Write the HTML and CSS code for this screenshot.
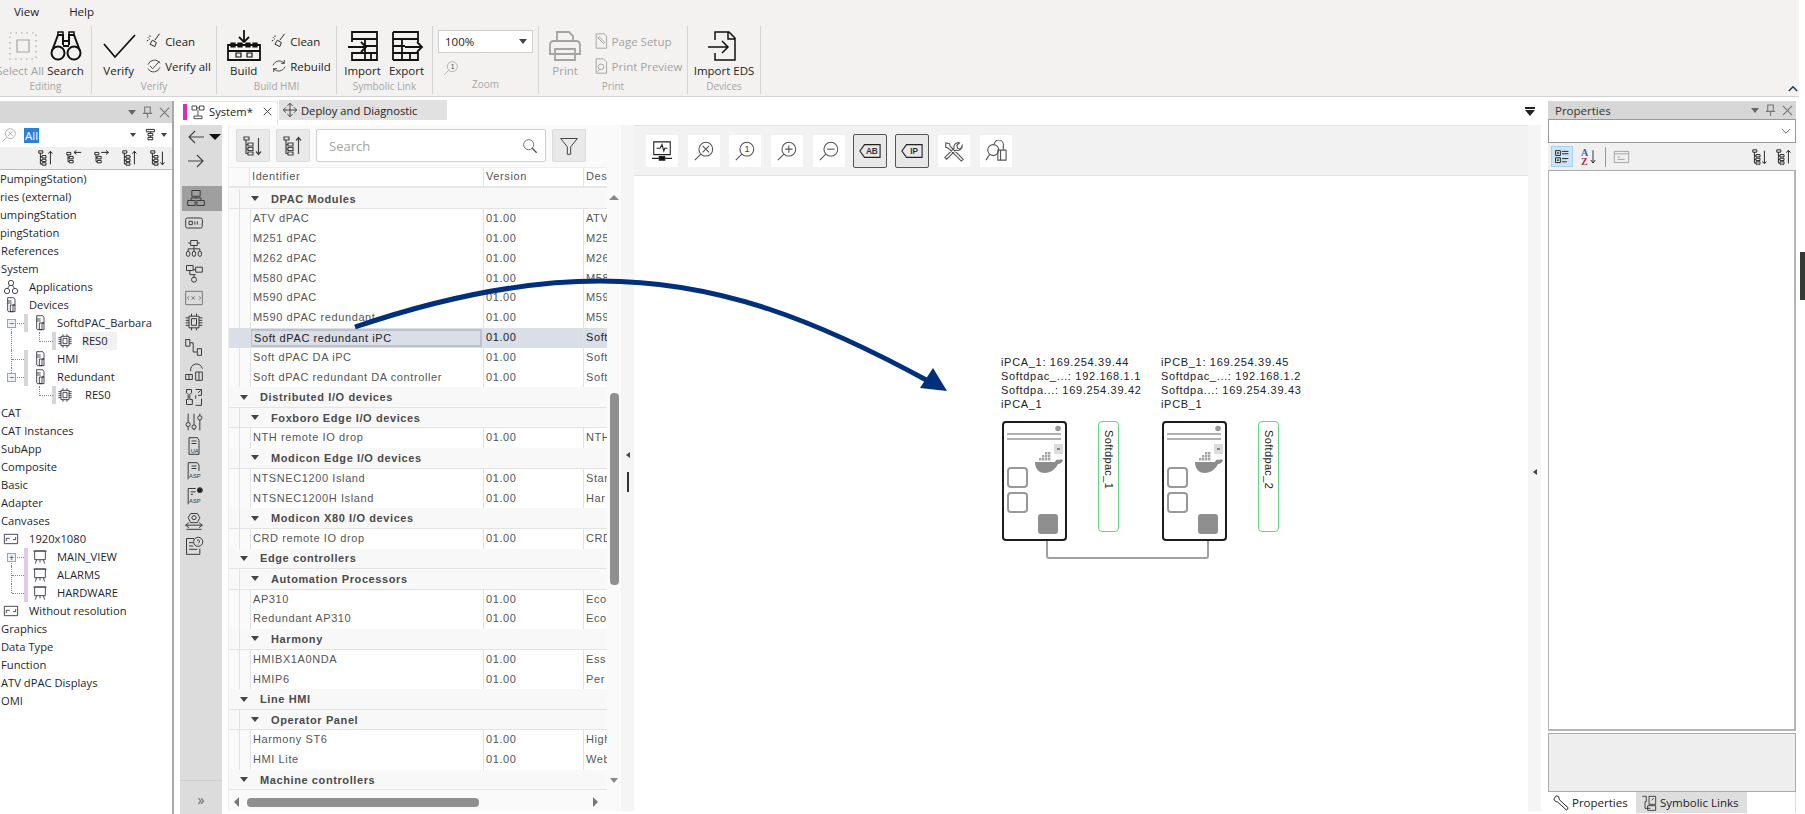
FILE: index.html
```html
<!DOCTYPE html>
<html>
<head>
    <title>System</title>
    <link rel="stylesheet" href="styles.css">
</head>
<body>
    <svg class="defs" width="0" height="0">
        <symbol id="i-tree-down" viewBox="0 0 20 20"><path d="M1 1h5v3H1zM5 7h5v3H5zM5 11.500h5v3H5zM5 16h5v3H5zM3 4v13.500h2M3 8.500h2M3 13h2M15.500 2v16M13 15.500l2.500 3 2.500-3"/></symbol>
        <symbol id="i-tree-up" viewBox="0 0 20 20"><path d="M1 1h5v3H1zM5 7h5v3H5zM5 11.500h5v3H5zM5 16h5v3H5zM3 4v13.500h2M3 8.500h2M3 13h2M15.500 18V2M13 4.500l2.500-3 2.500 3"/></symbol>
        <symbol id="i-tree-left" viewBox="0 0 20 20"><path d="M1 3h5v3H1zM4 8h5v3H4zM4 13h5v3H4zM2.500 6v8.500H4M2.500 9.500H4M19 3H10M13 .5L10 3l3 2.500"/></symbol>
        <symbol id="i-tree-right" viewBox="0 0 20 20"><path d="M1 3h5v3H1zM4 8h5v3H4zM4 13h5v3H4zM2.500 6v8.500H4M2.500 9.500H4M9 3h9M15 .5L18 3l-3 2.500"/></symbol>
        <symbol id="i-zoom" viewBox="0 0 24 24"><circle cx="14" cy="10" r="7.500"/><path d="M8.500 15.500L2 22"/></symbol>
        <symbol id="i-device" viewBox="0 0 20 24"><path d="M5 1h9l2 3v8h-3v10H6l-1-2zM9 12h7v10H9zM5 6h6M5 9h6"/></symbol>
        <symbol id="i-chip" viewBox="0 0 24 24"><path d="M6 5h12v14H6zM9 8h6v8H9zM2 7h4M2 10h4M2 13h4M2 16h4M18 7h4M18 10h4M18 13h4M18 16h4M9 2v3M15 2v3M9 19v3M15 19v3"/></symbol>
        <symbol id="i-apps" viewBox="0 0 24 24"><circle cx="12" cy="6" r="4"/><circle cx="6" cy="18" r="4"/><circle cx="18" cy="18" r="4"/><path d="M10 9l-3 5M14 9l3 5"/></symbol>
        <symbol id="i-res" viewBox="0 0 24 24"><path d="M2 5h20v14H2zM5 15v-4h5M19 9v4h-4"/></symbol>
        <symbol id="i-board" viewBox="0 0 24 24"><path d="M4 3h16v13H4zM2 3h20M7 16l-2 6M17 16l2 6M12 16v4"/></symbol>
        <symbol id="i-broom" viewBox="0 0 20 20"><path d="M17 1l-6 8M8 9l5 3-2 5-6-3zM2 5l1 1M5 3v2M1 10l2-1M4 8l1-1"/></symbol>
        <symbol id="i-verifyall" viewBox="0 0 24 24"><path d="M21 8a10 10 0 0 0-18 2M3 16a10 10 0 0 0 18-2M6 12l4 4 10-11"/></symbol>
        <symbol id="i-rebuild" viewBox="0 0 24 24"><path d="M20 8a10 10 0 0 0-17 3M4 16a10 10 0 0 0 17-3M20 3v5h-5M4 21v-5h5"/></symbol>
        <symbol id="i-table-in" viewBox="0 0 32 32"><path d="M5 12V2h25v28H5v-8M5 9h25M5 23h25M18 9v21M24 23v7M18 16h12M1 17h18M14 12l5 5-5 5"/></symbol>
        <symbol id="i-table-out" viewBox="0 0 32 32"><path d="M2 2h25v10M2 30V2M2 30h25v-8M2 9h25M2 23h25M11 9v21M19 23v7M2 16h12M14 17h17M26 12l5 5-5 5"/></symbol>
        <symbol id="ipc" viewBox="0 0 65 120">
            <rect x="1" y="1" width="63" height="118" rx="3" fill="#fff" stroke="#1c1c1c" stroke-width="2"/>
            <circle cx="56" cy="7.500" r="2.800" fill="#999" stroke="none"/>
            <path d="M5 13h54M5 18h54" stroke="#999" stroke-width="1.500" fill="none"/>
            <rect x="52" y="23" width="9" height="10" fill="#ddd" stroke="none"/>
            <path d="M55 28h3" stroke="#333" stroke-width="1"/>
            <path d="M33 41h20c1-3 3-3 4-2 1-1 3-1 4 0-1 3-3 4-5 4-2 5-8 9-13 9-7 0-10-5-10-11z" fill="#8c8c8c" stroke="none"/>
            <path d="M37 37h2.400v2.400H37zM40 37h2.400v2.400H40zM43 37h2.400v2.400H43zM46 37h2.400v2.400H46zM40 34h2.400v2.400H40zM43 34h2.400v2.400H43zM46 34h2.400v2.400H46zM43 31h2.400v2.400H43zM46 31h2.400v2.400H46z" fill="#a5a5a5" stroke="none"/>
            <rect x="6" y="47" width="19" height="19" rx="3" fill="none" stroke="#999" stroke-width="2"/>
            <rect x="6" y="72" width="19" height="19" rx="3" fill="none" stroke="#999" stroke-width="2"/>
            <rect x="36" y="93" width="20" height="20" rx="3" fill="#8f8f8f" stroke="none"/>
        </symbol>
    </svg>

    <div class="menubar">
        <span class="menu-item">View</span>
        <span class="menu-item">Help</span>
    </div>

    <div class="ribbon">
        <div class="rgroup w-editing">
            <div class="rbody">
                <div class="big off cut">
                    <svg class="ic32" viewBox="0 0 32 32"><path d="M3 3h26v26H3z" stroke-dasharray="1.500 4"/><path d="M10 10h12v12H10z"/></svg>
                    <span>Select All</span>
                </div>
                <div class="big">
                    <svg class="ic32" viewBox="0 0 32 32"><circle cx="8" cy="23" r="6.500" stroke-width="2"/><circle cx="24" cy="23" r="6.500" stroke-width="2"/><path d="M2 21L8 5h5v10M30 21L24 5h-5v10M13 11h6M13 16h6" stroke-width="2"/><path d="M8 5V2h5v3M19 5V2h5v3" stroke-width="1.500"/></svg>
                    <span>Search</span>
                </div>
            </div>
            <div class="rtitle">Editing</div>
        </div>
        <div class="rgroup w-verify">
            <div class="rbody">
                <div class="big">
                    <svg class="ic32 wide" viewBox="0 0 34 32"><path d="M2 14l11 13L33 5" stroke-width="1.800"/></svg>
                    <span>Verify</span>
                </div>
                <div class="smalls">
                    <div class="small"><svg class="ic16"><use href="#i-broom"/></svg><span>Clean</span></div>
                    <div class="small"><svg class="ic16"><use href="#i-verifyall"/></svg><span>Verify all</span></div>
                </div>
            </div>
            <div class="rtitle">Verify</div>
        </div>
        <div class="rgroup w-build">
            <div class="rbody">
                <div class="big">
                    <svg class="ic32 wide" viewBox="0 0 34 32"><path d="M17 0v11M12 7l5 5 5-5M1 30V15h32v15zM1 21h32" stroke-width="1.800"/><path d="M4 13h4v4H4zM11 13h4v4h-4zM19 13h4v4h-4zM26 13h4v4h-4z" fill="#111"/><path d="M9 23h5v4H9zM20 23h5v4h-5z"/></svg>
                    <span>Build</span>
                </div>
                <div class="smalls">
                    <div class="small"><svg class="ic16"><use href="#i-broom"/></svg><span>Clean</span></div>
                    <div class="small"><svg class="ic16"><use href="#i-rebuild"/></svg><span>Rebuild</span></div>
                </div>
            </div>
            <div class="rtitle">Build HMI</div>
        </div>
        <div class="rgroup w-symbolic">
            <div class="rbody">
                <div class="big narrow"><svg class="ic32 strong"><use href="#i-table-in"/></svg><span>Import</span></div>
                <div class="big narrow"><svg class="ic32 strong"><use href="#i-table-out"/></svg><span>Export</span></div>
            </div>
            <div class="rtitle">Symbolic Link</div>
        </div>
        <div class="rgroup w-zoom">
            <div class="zoom-body">
                <div class="zoom-combo"><span>100%</span><i class="tri-down"></i></div>
                <svg class="ic16 off zoom-one" viewBox="0 0 24 24"><use href="#i-zoom" width="24" height="24"/><text x="11.500" y="14" class="one">1</text></svg>
            </div>
            <div class="rtitle">Zoom</div>
        </div>
        <div class="rgroup w-print">
            <div class="rbody">
                <div class="big off">
                    <svg class="ic32 wide" viewBox="0 0 34 32"><path d="M9 11V2h12l4 4v5M6 24H2V15q0-4 4-4h22q4 0 4 4v9h-4M7 19h20v11H7zM7 24h20" stroke-width="1.800"/></svg>
                    <span>Print</span>
                </div>
                <div class="smalls">
                    <div class="small off"><svg class="ic16" viewBox="0 0 20 20"><path d="M4 1h10l3 3v15H4zM6 6l7 7 2-1-7-7z"/></svg><span>Page Setup</span></div>
                    <div class="small off"><svg class="ic16" viewBox="0 0 20 20"><path d="M4 1h9l4 4v14H4z"/><circle cx="10" cy="11" r="3.500"/><path d="M8 14l-2 3"/></svg><span>Print Preview</span></div>
                </div>
            </div>
            <div class="rtitle">Print</div>
        </div>
        <div class="rgroup w-devices">
            <div class="rbody">
                <div class="big">
                    <svg class="ic32" viewBox="0 0 32 32"><path d="M7 10V2h14l6 6v22H7v-7M20 2v7h7M0 17h19M14 11l6 6-6 6" stroke-width="1.500"/></svg>
                    <span>Import EDS</span>
                </div>
            </div>
            <div class="rtitle">Devices</div>
        </div>
        <svg class="ribbon-toggle" viewBox="0 0 12 8"><path d="M1 7l5-5 5 5"/></svg>
    </div>

    <div class="workspace">
        <div class="left-panel">
            <div class="pane-head">
                <span class="pane-title"></span>
                <i class="tri-down"></i>
                <svg class="pane-ic" viewBox="0 0 12 14"><path d="M3 1h6v7H3zM1 8h10M6 8v5"/></svg>
                <svg class="pane-ic" viewBox="0 0 12 14"><path d="M1 2l10 10M11 2L1 12"/></svg>
            </div>
            <div class="filter-row">
                <svg class="ic16 off" viewBox="0 0 24 24"><use href="#i-zoom" width="24" height="24"/><path d="M10.500 6.500l7 7M17.500 6.500l-7 7"/></svg>
                <span class="filter-all">All</span>
                <i class="tri-down small-tri"></i>
                <svg class="ic16 filter-ic" viewBox="0 0 20 20"><path d="M3 3h10v3H3zM5 8h6v3H5zM5 13h6v3H5zM8 6v2M8 11v2"/></svg>
                <i class="tri-down small-tri"></i>
            </div>
            <div class="left-tools">
                <svg class="ic16"><use href="#i-tree-up"/></svg>
                <svg class="ic16"><use href="#i-tree-left"/></svg>
                <svg class="ic16"><use href="#i-tree-right"/></svg>
                <svg class="ic16"><use href="#i-tree-up"/></svg>
                <svg class="ic16"><use href="#i-tree-down"/></svg>
            </div>
            <div class="tree">
                <div class="node">PumpingStation)</div>
                <div class="node">ries (external)</div>
                <div class="node">umpingStation</div>
                <div class="node">pingStation</div>
                <div class="node l0">References</div>
                <div class="node l0">System</div>
                <div class="node l1"><svg class="ic16"><use href="#i-apps"/></svg><span>Applications</span></div>
                <div class="node l1"><svg class="ic16"><use href="#i-device"/></svg><span>Devices</span></div>
                <div class="node l2 start"><i class="box">−</i><i class="bar"></i><svg class="ic16"><use href="#i-device"/></svg><span>SoftdPAC_Barbara</span></div>
                <div class="node l3 through"><i class="bar"></i><svg class="ic16"><use href="#i-chip"/></svg><span class="res-sel">RES0</span></div>
                <div class="node l2"><i class="box none"></i><i class="bar"></i><svg class="ic16"><use href="#i-device"/></svg><span>HMI</span></div>
                <div class="node l2 end"><i class="box">−</i><i class="bar"></i><svg class="ic16"><use href="#i-device"/></svg><span>Redundant</span></div>
                <div class="node l3"><i class="bar"></i><svg class="ic16"><use href="#i-chip"/></svg><span class="res-plain">RES0</span></div>
                <div class="node l0">CAT</div>
                <div class="node l0">CAT Instances</div>
                <div class="node l0">SubApp</div>
                <div class="node l0">Composite</div>
                <div class="node l0">Basic</div>
                <div class="node l0">Adapter</div>
                <div class="node l0">Canvases</div>
                <div class="node l1"><svg class="ic16"><use href="#i-res"/></svg><span>1920x1080</span></div>
                <div class="node l2 start"><i class="box">+</i><i class="bar pink"></i><svg class="ic16"><use href="#i-board"/></svg><span>MAIN_VIEW</span></div>
                <div class="node l2"><i class="box none"></i><i class="bar pink"></i><svg class="ic16"><use href="#i-board"/></svg><span>ALARMS</span></div>
                <div class="node l2 end"><i class="box none"></i><i class="bar pink"></i><svg class="ic16"><use href="#i-board"/></svg><span>HARDWARE</span></div>
                <div class="node l1"><svg class="ic16"><use href="#i-res"/></svg><span>Without resolution</span></div>
                <div class="node l0">Graphics</div>
                <div class="node l0">Data Type</div>
                <div class="node l0">Function</div>
                <div class="node l0">ATV dPAC Displays</div>
                <div class="node l0">OMI</div>
            </div>
        </div>

        <div class="doc-area">
            <div class="tabbar">
                <div class="tab active">
                    <i class="tab-mark"></i>
                    <svg class="ic16" viewBox="0 0 24 24"><path d="M3 3h7v6H3zM14 3h7v6h-7zM10 6h4M12 9v9M6 18h12v4H6z"/></svg>
                    <span>System*</span>
                    <svg class="tab-x" viewBox="0 0 12 12"><path d="M1 1l10 10M11 1L1 11"/></svg>
                </div>
                <div class="tab">
                    <svg class="ic16" viewBox="0 0 24 24"><path d="M12 2v20M8 6l4-4 4 4M8 18l4 4 4-4M2 12h20M6 8l-4 4 4 4M18 8l4 4-4 4"/></svg>
                    <span>Deploy and Diagnostic</span>
                </div>
                <svg class="tab-menu" viewBox="0 0 10 9"><path d="M0 0h10v2H0zM0 3h10L5 9z"/></svg>
            </div>
            <div class="doc-body">
                <div class="rail">
                    <div class="rail-nav">
                        <svg class="ic20" viewBox="0 0 20 20"><path d="M18 10H3M9 4l-6 6 6 6"/></svg>
                        <i class="tri-down big-tri"></i>
                    </div>
                    <div class="rail-nav">
                        <svg class="ic20" viewBox="0 0 20 20"><path d="M2 10h15M11 4l6 6-6 6"/></svg>
                    </div>
                    <div class="rail-item on"><svg class="ic20" viewBox="0 0 24 24"><path d="M7 3h10v7H7zM2 15h9v6H2zM13 15h9v6h-9zM12 10v2M6 15v-3h12v3"/></svg></div>
                    <div class="rail-item"><svg class="ic20" viewBox="0 0 24 24"><rect x="2" y="6" width="20" height="12" rx="2"/><path d="M6 10v4h4v-4zM13 10v4M16 10v4M19 14h.5"/></svg></div>
                    <div class="rail-item"><svg class="ic20" viewBox="0 0 24 24"><path d="M8 3h8v6H8zM5 6h3M16 6h3M12 9v4M5 13h14M5 13v3M12 13v3M19 13v3"/><rect x="3" y="16" width="4" height="6" rx="2"/><rect x="10" y="16" width="4" height="6" rx="2"/><rect x="17" y="16" width="4" height="6" rx="2"/></svg></div>
                    <div class="rail-item"><svg class="ic20" viewBox="0 0 24 24"><path d="M3 3h8v6H3zM14 5h8v6h-8zM7 9v5h7M14 8h-3M12 14v3"/><circle cx="12" cy="20" r="3"/></svg></div>
                    <div class="rail-item"><svg class="ic20 faint" viewBox="0 0 24 24"><path d="M2 4h20v16H2z"/><path d="M6 10l-2 2 2 2M18 10l2 2-2 2M9 10l4 4M13 10l-4 4"/></svg></div>
                    <div class="rail-item"><svg class="ic20"><use href="#i-chip"/></svg></div>
                    <div class="rail-item"><svg class="ic20" viewBox="0 0 24 24"><path d="M2 3h5v8H2zM16 14h5v8h-5zM7 7h4v11h5"/></svg></div>
                    <div class="rail-item"><svg class="ic20" viewBox="0 0 24 24"><path d="M8 11a7 7 0 0 1 14-3M14 12h8v10h-8zM18 12v10M2 15h8v6H2zM6 15v6"/></svg></div>
                    <div class="rail-item"><svg class="ic20" viewBox="0 0 24 24"><path d="M3 3h6v4l-2 2v6h3v6H3v-6h2V9L3 7zM14 3h7v7h-4M17 7l3-3M21 14v8h-7M14 10v4"/></svg></div>
                    <div class="rail-item"><svg class="ic20" viewBox="0 0 24 24"><path d="M5 2v20M12 2v20M19 2v20"/><circle cx="5" cy="15" r="2.500" fill="#dcdcdc"/><circle cx="12" cy="18" r="2.500" fill="#dcdcdc"/><circle cx="19" cy="7" r="2.500" fill="#dcdcdc"/></svg></div>
                    <div class="rail-item"><svg class="ic20" viewBox="0 0 24 24"><path d="M6 12V2h10l2 3v7M6 12v10h12V12M9 6h6M9 9h6"/><text x="8" y="20" class="rail-label">UA</text></svg></div>
                    <div class="rail-item"><svg class="ic20" viewBox="0 0 24 24"><path d="M5 12V2h11l2 3v7M5 12v10M9 6h6M9 9h6"/><text x="6" y="20" class="rail-label">ASP</text></svg></div>
                    <div class="rail-item"><svg class="ic20" viewBox="0 0 24 24"><path d="M5 12V3h9M5 12v10M8 7h6M8 10h3"/><circle cx="19" cy="5" r="3" fill="#222"/><text x="6" y="20" class="rail-label">ASP</text></svg></div>
                    <div class="rail-item"><svg class="ic20" viewBox="0 0 24 24"><path d="M8 3h8l3 5-3 6H8L5 8zM2 17h20M6 14l-4 3 4 3M18 14l4 3-4 3M3 22h18"/><circle cx="12" cy="8" r="2.500"/></svg></div>
                    <div class="rail-item"><svg class="ic20" viewBox="0 0 24 24"><path d="M3 3h9M3 3v19h16v-7M6 8h5M6 12h5M6 16h10"/><circle cx="17" cy="7" r="5.500"/><path d="M15.500 5.500q2-2 3 0t-1.500 3M17 10v.5"/></svg></div>
                    <div class="rail-more">»</div>
                </div>

                <div class="lib-panel">
                    <div class="lib-tools">
                        <div class="lib-btn"><svg class="ic20"><use href="#i-tree-down"/></svg></div>
                        <div class="lib-btn"><svg class="ic20"><use href="#i-tree-up"/></svg></div>
                        <div class="lib-search">
                            <span>Search</span>
                            <svg class="ic16" viewBox="0 0 24 24"><circle cx="10" cy="10" r="7.500"/><path d="M15 15l7 7" stroke-width="2"/></svg>
                        </div>
                        <div class="lib-btn"><svg class="ic20" viewBox="0 0 24 24"><path d="M2 3h20l-8 10v9h-4v-9z"/></svg></div>
                    </div>
                    <div class="th">
                        <span class="c-gut"></span>
                        <span class="c-id">Identifier</span>
                        <span class="c-ver">Version</span>
                        <span class="c-desc">Des</span>
                    </div>
                    <div class="lib-main">
                        <div class="rows">
                            <div class="g2"><i class="tri-down"></i>DPAC Modules</div>
                            <div class="row"><span class="c-id">ATV dPAC</span><span class="c-ver">01.00</span><span class="c-desc">ATV</span></div>
                            <div class="row"><span class="c-id">M251 dPAC</span><span class="c-ver">01.00</span><span class="c-desc">M25</span></div>
                            <div class="row"><span class="c-id">M262 dPAC</span><span class="c-ver">01.00</span><span class="c-desc">M26</span></div>
                            <div class="row"><span class="c-id">M580 dPAC</span><span class="c-ver">01.00</span><span class="c-desc">M58</span></div>
                            <div class="row"><span class="c-id">M590 dPAC</span><span class="c-ver">01.00</span><span class="c-desc">M59</span></div>
                            <div class="row"><span class="c-id">M590 dPAC redundant</span><span class="c-ver">01.00</span><span class="c-desc">M59</span></div>
                            <div class="row sel"><span class="c-id">Soft dPAC redundant iPC</span><span class="c-ver">01.00</span><span class="c-desc">Soft</span></div>
                            <div class="row"><span class="c-id">Soft dPAC DA iPC</span><span class="c-ver">01.00</span><span class="c-desc">Soft</span></div>
                            <div class="row"><span class="c-id">Soft dPAC redundant DA controller</span><span class="c-ver">01.00</span><span class="c-desc">Soft</span></div>
                            <div class="g1"><i class="tri-down"></i>Distributed I/O devices</div>
                            <div class="g2"><i class="tri-down"></i>Foxboro Edge I/O devices</div>
                            <div class="row"><span class="c-id">NTH remote IO drop</span><span class="c-ver">01.00</span><span class="c-desc">NTH</span></div>
                            <div class="g2"><i class="tri-down"></i>Modicon Edge I/O devices</div>
                            <div class="row"><span class="c-id">NTSNEC1200 Island</span><span class="c-ver">01.00</span><span class="c-desc">Stan</span></div>
                            <div class="row"><span class="c-id">NTSNEC1200H Island</span><span class="c-ver">01.00</span><span class="c-desc">Har</span></div>
                            <div class="g2"><i class="tri-down"></i>Modicon X80 I/O devices</div>
                            <div class="row"><span class="c-id">CRD remote IO drop</span><span class="c-ver">01.00</span><span class="c-desc">CRD</span></div>
                            <div class="g1"><i class="tri-down"></i>Edge controllers</div>
                            <div class="g2"><i class="tri-down"></i>Automation Processors</div>
                            <div class="row"><span class="c-id">AP310</span><span class="c-ver">01.00</span><span class="c-desc">Eco</span></div>
                            <div class="row"><span class="c-id">Redundant AP310</span><span class="c-ver">01.00</span><span class="c-desc">Eco</span></div>
                            <div class="g2"><i class="tri-down"></i>Harmony</div>
                            <div class="row"><span class="c-id">HMIBX1A0NDA</span><span class="c-ver">01.00</span><span class="c-desc">Ess</span></div>
                            <div class="row"><span class="c-id">HMIP6</span><span class="c-ver">01.00</span><span class="c-desc">Per</span></div>
                            <div class="g1"><i class="tri-down"></i>Line HMI</div>
                            <div class="g2"><i class="tri-down"></i>Operator Panel</div>
                            <div class="row"><span class="c-id">Harmony ST6</span><span class="c-ver">01.00</span><span class="c-desc">High</span></div>
                            <div class="row"><span class="c-id">HMI Lite</span><span class="c-ver">01.00</span><span class="c-desc">Web</span></div>
                            <div class="g1"><i class="tri-down"></i>Machine controllers</div>
                        </div>
                        <div class="vscroll">
                            <i class="tri-up"></i>
                            <div class="vthumb"></div>
                            <i class="tri-down grey"></i>
                        </div>
                    </div>
                    <div class="hscroll">
                        <i class="tri-left"></i>
                        <div class="hthumb"></div>
                        <i class="tri-right"></i>
                    </div>
                </div>

                <div class="split">
                    <i class="tri-left tiny"></i>
                    <div class="split-bar"></div>
                </div>

                <div class="canvas-wrap">
                    <div class="canvas-tools">
                        <div class="cbtn"><svg class="ic22 dark" viewBox="0 0 24 24"><path d="M3 2h18v14H3zM6 9h4l2-4 2 7 1-3h3M1 20h22"/><path d="M9 18h6v4H9z" fill="#111"/></svg></div>
                        <div class="cbtn"><svg class="ic22" viewBox="0 0 24 24"><use href="#i-zoom" width="24" height="24"/><path d="M10.500 6.500l7 7M17.500 6.500l-7 7"/></svg></div>
                        <div class="cbtn"><svg class="ic22" viewBox="0 0 24 24"><use href="#i-zoom" width="24" height="24"/><text x="11.500" y="13.500" class="one">1</text></svg></div>
                        <div class="cbtn"><svg class="ic22" viewBox="0 0 24 24"><use href="#i-zoom" width="24" height="24"/><path d="M10 10h8M14 6v8"/></svg></div>
                        <div class="cbtn"><svg class="ic22" viewBox="0 0 24 24"><use href="#i-zoom" width="24" height="24"/><path d="M10 10h8"/></svg></div>
                        <div class="cbtn toggled"><svg class="ic22 dark" viewBox="0 0 24 24"><path d="M6 5h17v14H6l-5-7z"/><text x="7.500" y="15.500" class="tag">AB</text></svg></div>
                        <div class="cbtn toggled"><svg class="ic22 dark" viewBox="0 0 24 24"><path d="M6 5h17v14H6l-5-7z"/><text x="10" y="15.500" class="tag">IP</text></svg></div>
                        <div class="cbtn"><svg class="ic22" viewBox="0 0 24 24"><path d="M3 3l4 1 1 3 14 14-2 2L6 9 3 8zM21 6a5 5 0 0 1-7 5L4 21l-2-2L12 9a5 5 0 0 1 6-6l-3 3 1 3 3 1z"/></svg></div>
                        <div class="cbtn"><svg class="ic22" viewBox="0 0 24 24"><circle cx="9" cy="11" r="6"/><path d="M5 16l-4 6M10 5a5 5 0 0 1 10 0v6h3v11h-9V11h6M17 11v11"/></svg></div>
                    </div>
                    <div class="diagram">
                        <div class="labels lab-a">iPCA_1: 169.254.39.44<br>Softdpac_...: 192.168.1.1<br>Softdpa...: 169.254.39.42<br>iPCA_1</div>
                        <div class="labels lab-b">iPCB_1: 169.254.39.45<br>Softdpac_...: 192.168.1.2<br>Softdpa...: 169.254.39.43<br>iPCB_1</div>
                        <svg class="wire" viewBox="0 0 700 400"><path d="M413 359v21q0 2 2 2h157q2 0 2-2v-21"/></svg>
                        <svg class="ipc ipc-a"><use href="#ipc"/></svg>
                        <svg class="ipc ipc-b"><use href="#ipc"/></svg>
                        <div class="soft soft-a"><span>Softdpac_1</span></div>
                        <div class="soft soft-b"><span>Softdpac_2</span></div>
                    </div>
                </div>

                <div class="split right"><i class="tri-left tiny"></i></div>
            </div>
        </div>

        <div class="right-panel">
            <div class="pane-head props">
                <span class="pane-title">Properties</span>
                <i class="tri-down"></i>
                <svg class="pane-ic" viewBox="0 0 12 14"><path d="M3 1h6v7H3zM1 8h10M6 8v5"/></svg>
                <svg class="pane-ic" viewBox="0 0 12 14"><path d="M1 2l10 10M11 2L1 12"/></svg>
            </div>
            <div class="props-combo"><svg class="chev" viewBox="0 0 12 8"><path d="M1 1l5 5 5-5"/></svg></div>
            <div class="props-tools">
                <div class="cat-btn"><svg class="ic16" viewBox="0 0 20 20"><path d="M2 2h6v6H2zM2 11h6v6H2zM4 5h2M4 14h2M5 4v2M5 13v2M10 3h8M10 6h8M10 12h8M10 16h6"/></svg></div>
                <div class="az"><span class="a">A</span><span class="z">Z</span></div>
                <svg class="az-arrow" viewBox="0 0 8 20"><path d="M4 1v17M1 14l3 4 3-4"/></svg>
                <i class="tool-sep"></i>
                <svg class="ic16 off pages" viewBox="0 0 20 20"><path d="M1 3h18v14H1zM1 6h18M5 10h3M5 13h9"/></svg>
                <span class="spacer"></span>
                <svg class="ic16"><use href="#i-tree-down"/></svg>
                <svg class="ic16"><use href="#i-tree-up"/></svg>
            </div>
            <div class="props-list"></div>
            <div class="props-desc"></div>
            <div class="props-tabs">
                <div class="ptab active">
                    <svg class="ic16" viewBox="0 0 20 20"><path d="M1 5l3-4 3 1 1 4 11 10-2 3L6 9 3 8z"/></svg>
                    <span>Properties</span>
                </div>
                <div class="ptab">
                    <svg class="ic16" viewBox="0 0 24 24"><path d="M2 2h6v8H6v10h8M12 2h10v12H12zM16 8l3-3M10 16h12v7H10z"/></svg>
                    <span>Symbolic Links</span>
                </div>
            </div>
        </div>
    </div>

    <div class="edge-mark"></div>

    <!-- callout drawn over the screenshot -->
    <svg class="callout" viewBox="0 0 1805 814">
        <path class="callout-line" d="M355 327C470 288 550 281 600 281C720 281 820 322 930 382"/>
        <path class="callout-head" d="M947 391L920 388L933 368z"/>
    </svg>
</body>
</html>
```

FILE: styles.css
```css
* {
    margin: 0;
    padding: 0;
    box-sizing: border-box;
}

html, body {
    width: 1805px;
    height: 814px;
    overflow: hidden;
}

body {
    background: #fff;
    color: #222;
    font-family: "Open Sans", "Noto Sans", sans-serif;
    font-size: 11.5px;
    position: relative;
}

.defs {
    position: absolute;
}

svg {
    fill: none;
    stroke: currentColor;
    stroke-width: 1.2;
    flex: none;
}

.ic16 { width: 16px; height: 16px; }
.ic20 { width: 20px; height: 20px; }
.ic22 { width: 22px; height: 22px; color: #555; }
.ic22.dark { color: #222; }
.ic32 { width: 34px; height: 32px; color: #111; }
.ic32.strong { stroke-width: 1.8; }
.off { color: #a3a3a3; }
.off .ic16, .off .ic32 { color: #a3a3a3; }

.tri-down, .tri-up, .tri-left, .tri-right {
    display: inline-block;
    width: 0;
    height: 0;
    flex: none;
}

.tri-down {
    border-left: 4px solid transparent;
    border-right: 4px solid transparent;
    border-top: 5px solid #444;
}

.tri-down.grey { border-top-color: #888; }
.tri-up {
    border-left: 5px solid transparent;
    border-right: 5px solid transparent;
    border-bottom: 5px solid #888;
}

.tri-left {
    border-top: 5px solid transparent;
    border-bottom: 5px solid transparent;
    border-right: 5px solid #777;
}

.tri-right {
    border-top: 5px solid transparent;
    border-bottom: 5px solid transparent;
    border-left: 5px solid #777;
}

.tri-left.tiny {
    border-top-width: 3px;
    border-bottom-width: 3px;
    border-right: 4px solid #444;
}

/* menu and ribbon */
.menubar {
    width: 1799px;
    height: 26px;
    background: #f3f2f1;
    display: flex;
    align-items: center;
    padding-left: 14px;
    gap: 30px;
    font-size: 11.5px;
    padding-bottom: 4px;
}

.ribbon {
    width: 1799px;
    height: 71px;
    background: #f3f2f1;
    border-bottom: 1px solid #d2d2d2;
    display: flex;
    position: relative;
}

.rgroup {
    border-right: 1px solid #d4d4d4;
    height: 68px;
    display: flex;
    flex-direction: column;
    flex: none;
}

.w-editing { width: 92px; }
.w-verify { width: 125px; }
.w-build { width: 120px; }
.w-symbolic { width: 96px; }
.w-zoom { width: 106px; }
.w-print { width: 149px; }
.w-devices { width: 73px; }

.rbody {
    flex: 1;
    display: flex;
    justify-content: center;
}

.rtitle {
    text-align: center;
    color: #a6a6a6;
    font-size: 10px;
    line-height: 14px;
    height: 17px;
}

.big {
    display: flex;
    flex-direction: column;
    align-items: center;
    justify-content: flex-start;
    padding-top: 4px;
    gap: 1px;
    min-width: 43px;
    line-height: 16px;
    white-space: nowrap;
}

.big.cut {
    margin-left: -6px;
    width: 46px;
    overflow: hidden;
    align-items: flex-end;
}

.big.cut .ic32 { margin-right: 4px; }
.big.narrow { min-width: 44px; }

.smalls {
    display: flex;
    flex-direction: column;
    gap: 9px;
    padding-top: 7px;
    margin-left: 6px;
}

.small {
    display: flex;
    align-items: center;
    gap: 3px;
    height: 16px;
    white-space: nowrap;
}

.zoom-body {
    flex: 1;
    padding: 4px 0 0 5px;
}

.zoom-combo {
    width: 95px;
    height: 23px;
    background: #fff;
    border: 1px solid #cfcfcf;
    display: flex;
    align-items: center;
    justify-content: space-between;
    padding: 0 5px 0 6px;
}

.zoom-one { display: block; margin: 7px 0 0 5px; }

.ribbon-toggle {
    position: absolute;
    right: 1px;
    top: 59px;
    width: 10px;
    height: 7px;
    color: #1c3a55;
    stroke-width: 1.8;
}

/* workspace */
.workspace {
    display: flex;
    height: 717px;
    padding-top: 4px;
}

.pane-head {
    height: 22px;
    background: #d7d7d7;
    display: flex;
    align-items: center;
    gap: 6px;
    padding-right: 2px;
}

.pane-title { flex: 1; padding-left: 4px; }
.pane-ic { width: 11px; height: 13px; color: #777; }
.pane-head .tri-down { border-top-color: #666; }

.left-panel {
    width: 174px;
    flex: none;
    display: flex;
    flex-direction: column;
    border-right: 2px solid #aaa;
}

.filter-row {
    height: 24px;
    display: flex;
    align-items: center;
    padding-left: 1px;
    gap: 7px;
}

.filter-all {
    color: #fff;
    line-height: 15px;
    padding: 0 1px;
    width: 99px;
    background: linear-gradient(to right, #2a7fd6 15px, transparent 15px);
}

.small-tri {
    border-left-width: 3px;
    border-right-width: 3px;
    border-top-width: 4px;
}

.filter-row .filter-ic { margin-left: 1px; }
.filter-row .filter-ic + .small-tri { margin-left: -6px; }

.left-tools {
    height: 23px;
    background: #f0f0f0;
    display: flex;
    align-items: center;
    gap: 12px;
    padding-left: 38px;
    border-bottom: 1px solid #bbb;
}

.tree {
    flex: 1;
    overflow: hidden;
    font-size: 11.2px;
}

.node {
    height: 18px;
    line-height: 18px;
    display: flex;
    align-items: center;
    white-space: nowrap;
    color: #1f1f2e;
    position: relative;
}

.node.l0 { padding-left: 1px; }
.node.l1 { padding-left: 2px; }
.node.l1 .ic16 { margin-right: 10px; margin-left: 1px; }
.node.l2 { padding-left: 7px; }
.node.l2 .ic16 { margin: 0 9px 0 4px; }
.node.l3 { padding-left: 52px; }
.node.l3 .ic16 { margin: 0 9px 0 1px; }

/* dotted tree connectors */
.node.l2::before, .node.through::before {
    content: "";
    position: absolute;
    left: 11px;
    top: 0;
    bottom: 0;
    border-left: 1px dotted #888;
}

.node.start::before { top: 50%; }
.node.end::before { bottom: 50%; }

.node.l2::after {
    content: "";
    position: absolute;
    left: 12px;
    width: 12px;
    top: 50%;
    border-top: 1px dotted #888;
}

.node.l3::after {
    content: "";
    position: absolute;
    left: 39px;
    top: 0;
    width: 13px;
    height: 9px;
    border-left: 1px dotted #888;
    border-bottom: 1px dotted #888;
}

.box {
    width: 9px;
    height: 9px;
    margin-right: 8px;
    border: 1px solid #9aa3b5;
    background: #eef1f6;
    font-style: normal;
    font-size: 9px;
    line-height: 7px;
    text-align: center;
    color: #336;
    flex: none;
    position: relative;
    z-index: 1;
}

.box.none { border: 0; background: none; }

.bar {
    width: 4px;
    height: 18px;
    background: #d6d6d6;
    flex: none;
}

.bar.pink { background: #e2c8ea; }

.res-sel {
    background: #f1f1f1;
    padding: 0 9px 0 0;
}

.res-plain { margin-left: 3px; }

/* document area */
.doc-area {
    width: 1361px;
    margin-left: 6px;
    flex: none;
    display: flex;
    flex-direction: column;
}

.tabbar {
    height: 24px;
    display: flex;
    position: relative;
    padding-left: 1px;
}

.tab {
    height: 20px;
    display: flex;
    align-items: center;
    gap: 3px;
    padding: 0 0 0 3px;
    background: #e1e1e1;
    width: 168px;
    margin-top: -1px;
}

.tab.active {
    width: 97px;
    height: 24px;
    background: #fff;
    padding-left: 2px;
    margin-top: 0;
    gap: 3px;
    border-top: 1px solid #e6e6e6;
    border-right: 1px solid #e6e6e6;
    margin-right: 1px;
    padding-bottom: 4px;
}

.tab-mark {
    width: 4px;
    height: 16px;
    background: #e22bb0;
    flex: none;
}

.tab-x {
    width: 9px;
    height: 9px;
    margin-left: 7px;
    color: #333;
}

.tab span { font-size: 11.2px; }

.tab-menu {
    position: absolute;
    right: 6px;
    top: 6px;
    width: 10px;
    height: 9px;
    fill: #222;
    stroke: none;
}

.doc-body {
    height: 686px;
    display: flex;
}

.rail {
    width: 42px;
    background: #dcdcdc;
    display: flex;
    flex-direction: column;
    align-items: center;
    flex: none;
    height: 689px;
}

.rail-nav {
    width: 100%;
    height: 24px;
    display: flex;
    align-items: center;
    padding-left: 6px;
    gap: 3px;
    color: #444;
}

.big-tri {
    border-left-width: 6px;
    border-right-width: 6px;
    border-top-width: 6px;
    border-top-color: #111;
}

.rail-item {
    width: 100%;
    height: 24.8px;
    display: flex;
    align-items: center;
    padding-left: 4px;
    color: #3c3c3c;
    flex: none;
}

.rail-nav + .rail-item {
    margin-top: 13px;
}

.rail-item.on {
    background: #9f9f9f;
    margin-left: 1px;
    width: 40px;
}

.faint { color: #777; }

.rail-label {
    font-family: "Liberation Sans", sans-serif;
    font-size: 7px;
    stroke: none;
    fill: #333;
}

.rail-more {
    margin-top: auto;
    height: 34px;
    width: 100%;
    border-top: 1px solid #d0d0d0;
    text-align: center;
    line-height: 38px;
    color: #666;
    font-size: 14px;
}

/* library table */
.lib-panel {
    width: 393px;
    margin-left: 6px;
    flex: none;
    display: flex;
    flex-direction: column;
    background: #fafafa;
    font-family: "Liberation Sans", Arial, sans-serif;
    font-size: 11px;
    letter-spacing: 0.6px;
    color: #555;
    border-left: 1px solid #eee;
}

.lib-tools {
    height: 42px;
    display: flex;
    gap: 6px;
    padding: 4px 0 0 7px;
}

.lib-btn {
    width: 34px;
    height: 33px;
    background: #e9e9e9;
    border: 1px solid #dcdcdc;
    border-radius: 2px;
    display: flex;
    align-items: center;
    justify-content: center;
    color: #444;
}

.lib-search {
    width: 230px;
    height: 33px;
    background: #fff;
    border: 1px solid #cfcfcf;
    border-radius: 2px;
    display: flex;
    align-items: center;
    justify-content: space-between;
    padding: 0 7px 0 12px;
    font-family: "Open Sans", sans-serif;
    font-size: 13px;
    letter-spacing: 0;
    color: #a3a3a3;
}

.lib-search .ic16 { color: #555; }

.th {
    height: 21px;
    display: flex;
    align-items: center;
    border-bottom: 2px solid #e6e6e6;
    border-top: 1px solid #eee;
    width: 378px;
    background: #fff;
}

.th span { height: 100%; line-height: 16px; }
.c-gut { width: 21px; background: #fafafa; flex: none; border-left: 10px solid #fafafa; border-right: 1px solid #e2e2e2; }

.c-id {
    width: 233px;
    flex: none;
    padding-left: 2px;
    white-space: nowrap;
    overflow: hidden;
}

.c-ver {
    width: 100px;
    flex: none;
    border-left: 1px solid #e2e2e2;
    padding-left: 2px;
}

.c-desc {
    flex: 1;
    border-left: 1px solid #e2e2e2;
    padding-left: 2px;
    white-space: nowrap;
    overflow: hidden;
}

.lib-main {
    height: 605px;
    display: flex;
    padding-top: 0.75px;
}

.rows {
    width: 378px;
    overflow: hidden;
    flex: none;
}

.row, .g1, .g2 {
    display: flex;
    align-items: center;
    white-space: nowrap;
}

.row {
    height: 19.8px;
    margin-left: 21px;
    background: #fff;
    border-left: 1px solid #e2e2e2;
    position: relative;
}

.row::before {
    content: "";
    position: absolute;
    left: -12px;
    top: 0;
    bottom: 0;
    width: 1px;
    background: #e2e2e2;
}

.row .c-id { width: 232px; }
.row .c-id, .row .c-ver, .row .c-desc { line-height: 19.8px; }

.row.sel {
    margin-left: 0;
    padding-left: 22px;
    border-left: 0;
    background: #d9dee7;
    color: #222;
}

.row.sel::before { display: none; }

.row.sel .c-id {
    height: 18px;
    line-height: 15px;
    border: 2px solid #bcc1cb;
    border-left-width: 1px;
    padding-left: 2px;
    margin-right: 1px;
    width: 231px;
}

.g1, .g2 {
    height: 20.5px;
    background: #f8f8f8;
    font-weight: 700;
    color: #4a4a4a;
    border-bottom: 1px solid #e4e4e4;
}

.g1 { padding-left: 11px; }
.g1 .tri-down { margin-right: 12px; }
.g2 { padding-left: 22px; position: relative; }
.g2 .tri-down { margin-right: 12px; }

.g2::before {
    content: "";
    position: absolute;
    left: 10px;
    top: 0;
    bottom: 0;
    width: 1px;
    background: #e2e2e2;
}

.vscroll {
    width: 14px;
    display: flex;
    flex-direction: column;
    align-items: center;
    padding-top: 6px;
    background: #fafafa;
}

.vthumb {
    width: 9px;
    height: 192px;
    background: #8f8f8f;
    border-radius: 4px;
    margin: 193px 0 193px;
    flex: none;
}

.hscroll {
    height: 18px;
    display: flex;
    align-items: center;
    padding-left: 5px;
    width: 378px;
    background: #fafafa;
}

.hthumb {
    width: 232px;
    height: 9px;
    background: #8f8f8f;
    border-radius: 4px;
    margin: 0 114px 0 8px;
}

.split {
    width: 13px;
    flex: none;
    background: #f5f5f5;
    display: flex;
    flex-direction: column;
    align-items: center;
    padding-top: 327px;
    height: 686px;
}

.split.right { padding-top: 344px; }

.split-bar {
    width: 2px;
    height: 20px;
    background: #333;
    margin-top: 14px;
}

.canvas-wrap {
    width: 894px;
    flex: none;
    display: flex;
    flex-direction: column;
}

.canvas-tools {
    height: 51px;
    background: #f2f2f2;
    border-top: 1px solid #e2e2e2;
    border-bottom: 1px solid #e2e2e2;
    display: flex;
    align-items: center;
    padding-left: 12px;
    gap: 9.7px;
}

.cbtn {
    width: 32px;
    height: 32px;
    background: #fff;
    display: flex;
    align-items: center;
    justify-content: center;
}

.cbtn.toggled {
    width: 34px;
    height: 34px;
    background: #e8e8e8;
    border: 1px solid #555;
    border-radius: 2px;
    margin: 0 -1px;
}

.one, .tag {
    font-family: "Liberation Sans", sans-serif;
    stroke: none;
    fill: #444;
}

.one { font-size: 10px; }
.tag { font-size: 9px; font-weight: 700; fill: #333; }

/* free canvas: nodes keep their place on the drawing */
.diagram {
    flex: 1;
    position: relative;
}

.labels {
    position: absolute;
    top: 179px;
    font-family: "Liberation Sans", Arial, sans-serif;
    font-size: 11px;
    letter-spacing: 0.68px;
    line-height: 14px;
    white-space: nowrap;
    color: #222;
}

.lab-a { left: 367px; }
.lab-b { left: 527px; }

.wire {
    position: absolute;
    left: 0;
    top: 0;
    width: 700px;
    height: 400px;
    color: #a0a0a0;
    stroke-width: 2;
}

.ipc {
    position: absolute;
    top: 245px;
    width: 65px;
    height: 120px;
}

.ipc-a { left: 368px; }
.ipc-b { left: 528px; }

.soft {
    position: absolute;
    top: 245px;
    width: 21px;
    height: 111px;
    background: #fff;
    border: 1px solid #62d684;
    border-radius: 4px;
    display: flex;
    justify-content: center;
    padding-top: 8px;
    font-family: "Liberation Sans", Arial, sans-serif;
    font-size: 11px;
    letter-spacing: 0.35px;
    color: #222;
}

.soft span { writing-mode: vertical-rl; }
.soft-a { left: 464px; }
.soft-b { left: 624px; }

/* properties panel */
.right-panel {
    width: 248px;
    margin-left: 7px;
    flex: none;
    display: flex;
    flex-direction: column;
}

.pane-head.props {
    height: 18px;
    padding-right: 3px;
}

.pane-head.props .pane-title {
    font-size: 11.5px;
    color: #333;
    padding-left: 7px;
}

.props-combo {
    height: 24px;
    background: #fff;
    border: 1px solid #999;
    display: flex;
    align-items: center;
    justify-content: flex-end;
    padding-right: 4px;
}

.chev { width: 10px; height: 7px; color: #666; }

.props-tools {
    height: 27px;
    background: #f0f0f0;
    display: flex;
    align-items: center;
    padding: 0 4px 0 3px;
    gap: 8px;
}

.cat-btn {
    width: 22px;
    height: 21px;
    background: #cde4f7;
    border: 1px solid #a9d0f0;
    display: flex;
    align-items: center;
    justify-content: center;
}

.az {
    display: flex;
    flex-direction: column;
    font-family: "Liberation Serif", serif;
    font-size: 10px;
    font-weight: 700;
    line-height: 9px;
}

.az .a { color: #2f5fb8; }
.az .z { color: #b03030; }
.az-arrow { width: 6px; height: 18px; margin-left: -6px; }
.tool-sep { width: 1px; height: 20px; background: #999; margin-left: 1px; }
.pages { width: 17px; margin-left: -1px; }
.spacer { flex: 1; }

.props-list {
    height: 561px;
    background: #fff;
    border: 2px solid #b4b4b4;
    border-top-width: 1px;
    border-top-color: #aaa;
    border-left-width: 1px;
}

.props-desc {
    height: 59px;
    margin-top: 2px;
    background: #eee;
    border: 1px solid #aaa;
}

.props-tabs {
    height: 21px;
    display: flex;
    border-right: 1px solid #ddd;
}

.ptab {
    display: flex;
    align-items: center;
    gap: 3px;
    padding-left: 5px;
    height: 21px;
}

.ptab.active { width: 88px; background: #fff; }
.ptab:not(.active) { width: 111px; background: #dedede; }

.edge-mark {
    position: absolute;
    right: 0;
    top: 252px;
    width: 5px;
    height: 48px;
    background: #333a33;
}

.callout {
    position: absolute;
    left: 0;
    top: 0;
    width: 1805px;
    height: 814px;
    pointer-events: none;
}

.callout-line {
    stroke: #002f7c;
    stroke-width: 5;
}

.callout-head {
    fill: #002f7c;
    stroke: none;
}
```
